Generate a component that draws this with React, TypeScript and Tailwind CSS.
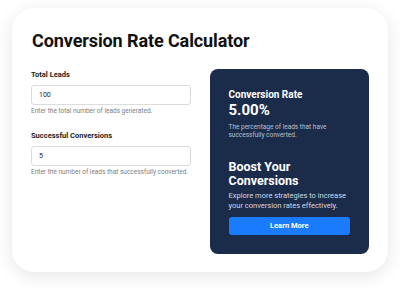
export default function App() {
  return (
    <div className="w-[400px] h-[288px] bg-white pt-[8px] px-[12px] font-['Roboto',sans-serif]">
      <div className="h-[264px] rounded-[22px] bg-white px-[19px] pt-[20px] shadow-[0_4px_18px_rgba(0,0,0,0.10)]">
        <h1 className="text-[18px] leading-[26px] font-bold tracking-[-0.1px] text-[#111111] pl-[1px]">Conversion Rate Calculator</h1>

        <div className="mt-[15px] grid grid-cols-2 gap-[19px]">
          {/* inputs */}
          <div className="pt-[1px]">
            <label className="block text-[7.5px] font-bold text-[#222] leading-[10px]">Total Leads</label>
            <input
              defaultValue="100"
              className="mt-[2px] w-full h-[20px] rounded-[3px] border border-[#dcdcdc] bg-white px-[7px] text-[7px] text-[#222] outline-none"
            />
            <p className="mt-[2px] text-[6.5px] leading-[9px] text-[#808080]">Enter the total number of leads generated.</p>

            <label className="mt-[15px] block text-[7.5px] font-bold text-[#222] leading-[10px]">Successful Conversions</label>
            <input
              defaultValue="5"
              className="mt-[2px] w-full h-[20px] rounded-[3px] border border-[#dcdcdc] bg-white px-[7px] text-[7px] text-[#222] outline-none"
            />
            <p className="mt-[2px] text-[6.5px] leading-[9px] text-[#808080]">Enter the number of leads that successfully converted.</p>
          </div>

          {/* result panel */}
          <div className="h-[185px] rounded-[8px] bg-[#1b2c4b] px-[19px] pt-[20px] text-white">
            <h2 className="text-[10px] leading-[12px] font-bold">Conversion Rate</h2>
            <p className="text-[15px] leading-[19px] font-bold">5.00%</p>
            <p className="mt-[3px] text-[6.5px] leading-[8px] text-[#b6c0d2] w-[110px]">
              The percentage of leads that have successfully converted.
            </p>

            <h3 className="mt-[21px] text-[12.5px] leading-[14px] font-bold">Boost Your Conversions</h3>
            <p className="mt-[3px] text-[7.5px] leading-[10px] text-[#d2d8e2]">
              Explore more strategies to increase your conversion rates effectively.
            </p>
            <button className="mt-[6px] w-full h-[18px] rounded-[3px] bg-[#1a7bff] text-[7.5px] font-bold text-white">
              Learn More
            </button>
          </div>
        </div>
      </div>
    </div>
  )
}
